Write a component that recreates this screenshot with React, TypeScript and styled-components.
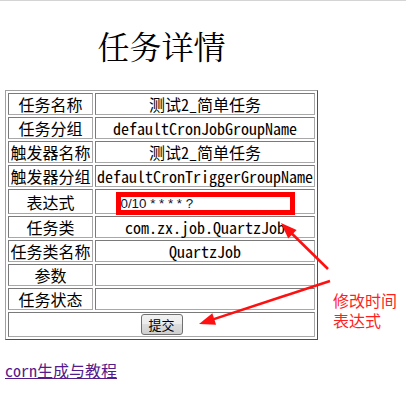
import React from "react";
import styled, { createGlobalStyle } from "styled-components";

const Global = createGlobalStyle`
  html, body { margin: 0; padding: 0; background: #ffffff; }
  body {
    font-family: "Noto Sans Mono CJK SC", "Noto Sans CJK SC", "Liberation Mono", monospace;
    color: #000;
  }
`;

const Page = styled.div`
  position: relative;
  width: 406px;
  height: 409px;
  box-sizing: border-box;
  border-top: 1px solid #d4d4d4;
  padding: 0 5px;
  overflow: hidden;
`;

const Content = styled.div`
  display: inline-flex;
  flex-direction: column;
  align-items: stretch;
`;

const Title = styled.h1`
  margin: 26px 0 0;
  font-family: "Noto Serif CJK SC", "Noto Sans CJK SC", serif;
  font-weight: normal;
  font-size: 32px;
  line-height: 37px;
  text-align: center;
`;

const Table = styled.table`
  margin-top: 26px;
  border-collapse: separate;
  border-spacing: 2px;
  border: 1px solid;
  border-color: #a0a0a0 #505050 #505050 #a0a0a0;
`;

const Cell = styled.td<{ $w?: number; $h?: number }>`
  border: 1px solid;
  border-color: #7a7a7a #a8a8a8 #a8a8a8 #7a7a7a;
  padding: 1px;
  ${(p) => (p.$w ? `width: ${p.$w}px;` : "")}
  height: ${(p) => p.$h ?? 18}px;
  text-align: center;
  vertical-align: middle;
  white-space: nowrap;
  font-size: 16px;
  line-height: 18px;
`;

const CronInput = styled.input`
  display: block;
  box-sizing: border-box;
  width: 179px;
  height: 23px;
  margin: 1px auto -3px;
  padding: 0;
  border: 5px solid #ff0000;
  outline: none;
  background: #fff;
  font-family: "Liberation Sans", Arial, sans-serif;
  font-size: 13.33px;
  color: #101030;
`;

const SubmitButton = styled.button`
  display: block;
  margin: 0 auto;
  box-sizing: border-box;
  width: 42px;
  height: 21px;
  padding: 0;
  border: 1px solid #707070;
  border-radius: 3px;
  background: linear-gradient(#f2f2f2, #ebebeb 50%, #dddddd 50%, #cfcfcf);
  font-family: "Noto Sans CJK SC", sans-serif;
  font-size: 13px;
  line-height: 17px;
  color: #000;
`;

const TutorialLink = styled.a`
  display: inline-block;
  margin-top: 21px;
  font-size: 16px;
  line-height: 18px;
  color: #551a8b;
  text-decoration: underline;
`;

const LinkRow = styled.div`
  display: block;
`;

const Note = styled.div`
  position: absolute;
  left: 333px;
  top: 289px;
  font-family: "Noto Sans CJK SC", sans-serif;
  font-size: 16px;
  line-height: 20px;
  color: #ff1f1f;
`;

const Overlay = styled.svg`
  position: absolute;
  left: 0;
  top: 0;
  pointer-events: none;
`;

type Pt = [number, number];

function Arrow({ from, to }: { from: Pt; to: Pt }) {
  const dx = to[0] - from[0];
  const dy = to[1] - from[1];
  const len = Math.hypot(dx, dy);
  const ux = dx / len;
  const uy = dy / len;
  const head = 16;
  const half = 6;
  const bx = to[0] - ux * head;
  const by = to[1] - uy * head;
  const px = -uy;
  const py = ux;
  const pts = `${to[0]},${to[1]} ${bx + px * half},${by + py * half} ${bx - px * half},${by - py * half}`;
  return (
    <g>
      <line x1={from[0]} y1={from[1]} x2={bx + ux * 2} y2={by + uy * 2} stroke="#ff1010" strokeWidth={2.6} />
      <polygon points={pts} fill="#ff1010" />
    </g>
  );
}

const rows: [string, string][] = [
  ["任务名称", "测试2_简单任务"],
  ["任务分组", "defaultCronJobGroupName"],
  ["触发器名称", "测试2_简单任务"],
  ["触发器分组", "defaultCronTriggerGroupName"],
];

const rows2: [string, string][] = [
  ["任务类", "com.zx.job.QuartzJob"],
  ["任务类名称", "QuartzJob"],
  ["参数", ""],
  ["任务状态", ""],
];

export default function App() {
  return (
    <>
      <Global />
      <Page>
        <Content>
          <Title>任务详情</Title>
          <Table>
            <tbody>
              {rows.map(([k, v], i) => (
                <tr key={k + i}>
                  <Cell $w={81}>{k}</Cell>
                  <Cell $w={215}>{v}</Cell>
                </tr>
              ))}
              <tr>
                <Cell $w={81} $h={21}>表达式</Cell>
                <Cell $w={215} $h={21}>
                  <CronInput defaultValue="0/10 * * * * ?" />
                </Cell>
              </tr>
              {rows2.map(([k, v], i) => (
                <tr key={k + i}>
                  <Cell $w={81}>{k}</Cell>
                  <Cell $w={215}>{v}</Cell>
                </tr>
              ))}
              <tr>
                <Cell colSpan={2} $h={21}>
                  <SubmitButton type="button">提交</SubmitButton>
                </Cell>
              </tr>
            </tbody>
          </Table>
        </Content>
        <LinkRow>
          <TutorialLink href="#">corn生成与教程</TutorialLink>
        </LinkRow>
        <Note>
          修改时间
          <br />
          表达式
        </Note>
        <Overlay width={406} height={409} viewBox="0 0 406 409">
          <Arrow from={[328, 268]} to={[281, 222]} />
          <Arrow from={[330, 280]} to={[199, 323]} />
        </Overlay>
      </Page>
    </>
  );
}
